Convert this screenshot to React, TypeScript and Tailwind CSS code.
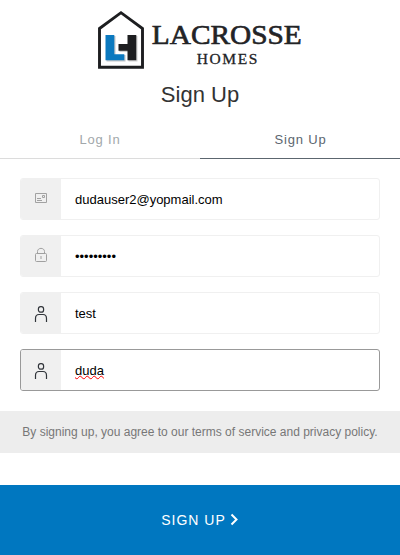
import type { ReactNode } from "react";

function Logo() {
  return (
    <svg width="208" height="60" viewBox="96 10 208 60" role="img" aria-label="Lacrosse Homes">
      <path d="M99.5 28.5 L121 12.7 L142.5 28.5 V67.3 H99.5 Z" fill="#fff" stroke="#1d1e20" strokeWidth="2.9" />
      <path d="M106.5 36 H115.5 V55 H125.5 V61.5 H106.5 Z" fill="#c3c6c9" />
      <path d="M128.5 36 H137.5 V61.5 H128.5 V52 H119.5 V45 H128.5 Z" fill="#d2d2d2" />
      <path d="M105.5 35 H114.3 V54.3 H124.3 V60.3 H105.5 Z" fill="#0b79bf" />
      <path d="M127.5 35 H136.3 V60.3 H127.5 V50.7 H118.5 V44 H127.5 Z" fill="#1d1e20" />
      <g fill="#222326" stroke="#222326" fontFamily="'Liberation Serif', serif">
        <text x="151.8" y="43.5" fontSize="28" strokeWidth="0.65" textLength="150" lengthAdjust="spacingAndGlyphs">LACROSSE</text>
        <text x="196.8" y="63.8" fontSize="15.5" strokeWidth="0.3" textLength="60.5" lengthAdjust="spacing">HOMES</text>
      </g>
    </svg>
  );
}

function MailIcon() {
  return (
    <svg className="mb-0.5" width="14" height="14" viewBox="0 0 14 14" fill="none" stroke="#a2a2a2">
      <path d="M1.5 2.5 H12.5 V11.5 H1.5 Z M8.5 4.5 H10.5 V6.5 H8.5 Z M3 7.5 H7 M3 9.5 H8" />
    </svg>
  );
}

function LockIcon() {
  return (
    <svg className="mb-0.5" width="14" height="16" viewBox="0 0 14 16" fill="none" stroke="#a0a0a0">
      <rect x="1.5" y="6.5" width="11" height="8" rx="1" />
      <path d="M3.5 6.5 V4.5 C3.5 0.3 10.5 0.3 10.5 4.5 V6.5 M7 9 V12" />
    </svg>
  );
}

function PersonIcon() {
  return (
    <svg className="mt-0.5" width="14" height="16" viewBox="0 0 14 16" fill="none" stroke="#30343a" strokeWidth="1.2">
      <rect x="4.4" y="0.6" width="5.2" height="5.6" rx="2.3" />
      <path d="M1.5 16 V12.5 Q1.5 8.5 5 8.5 H9 Q12.5 8.5 12.5 12.5 V16" />
    </svg>
  );
}

function Field({ icon, children, focused = false }: { icon: ReactNode; children: ReactNode; focused?: boolean }) {
  return (
    <div className={`flex h-[42px] overflow-hidden rounded-[3px] border ${focused ? "border-[#999999]" : "border-[#f0f0f0]"}`}>
      <div className="flex w-10 items-center justify-center bg-[#f0f0f0]">{icon}</div>
      <div className="flex items-center pl-[14px] pt-px text-[13px] text-black">{children}</div>
    </div>
  );
}

export default function App() {
  return (
    <main className="flex h-[555px] w-[400px] flex-col bg-white font-['Liberation_Sans',Arial,sans-serif]">
      <header className="flex flex-col items-center pt-[10px]">
        <Logo />
        <h1 className="mt-[10px] text-[22px] leading-[30px] text-[#333333]">Sign Up</h1>
      </header>
      <nav className="mt-[10px] grid h-[39px] grid-cols-2 text-center text-[13px] tracking-[0.8px]">
        <span className="h-[39px] border-b border-[#dcdcdc] leading-[40px] text-[#a2a8ab]">Log In</span>
        <span className="h-[39px] border-b border-[#5c666f] pl-px leading-[40px] text-[#5c666f]">Sign Up</span>
      </nav>
      <form className="mt-[19px] flex flex-col gap-[15px] px-5">
        <Field icon={<MailIcon />}>dudauser2@yopmail.com</Field>
        <Field icon={<LockIcon />}>•••••••••</Field>
        <Field icon={<PersonIcon />}>test</Field>
        <Field icon={<PersonIcon />} focused>
          <span className="underline decoration-[#ff0000] decoration-wavy decoration-1 underline-offset-0">duda</span>
        </Field>
      </form>
      <p className="mt-5 h-[42px] whitespace-nowrap bg-[#ededed] text-center text-[12px] leading-[42px] text-[#777777]">
        By signing up, you agree to our terms of service and privacy policy.
      </p>
      <button className="mt-8 flex h-[70px] items-center justify-center bg-[#0077c0] text-[14px] tracking-[1px] text-white">
        SIGN UP
        <svg className="mb-0.5 ml-1" width="9" height="13" viewBox="0 0 9 13" fill="none" stroke="white" strokeWidth="2">
          <path d="M1.5 1.5 L6.5 6.5 L1.5 11.5" />
        </svg>
      </button>
    </main>
  );
}
